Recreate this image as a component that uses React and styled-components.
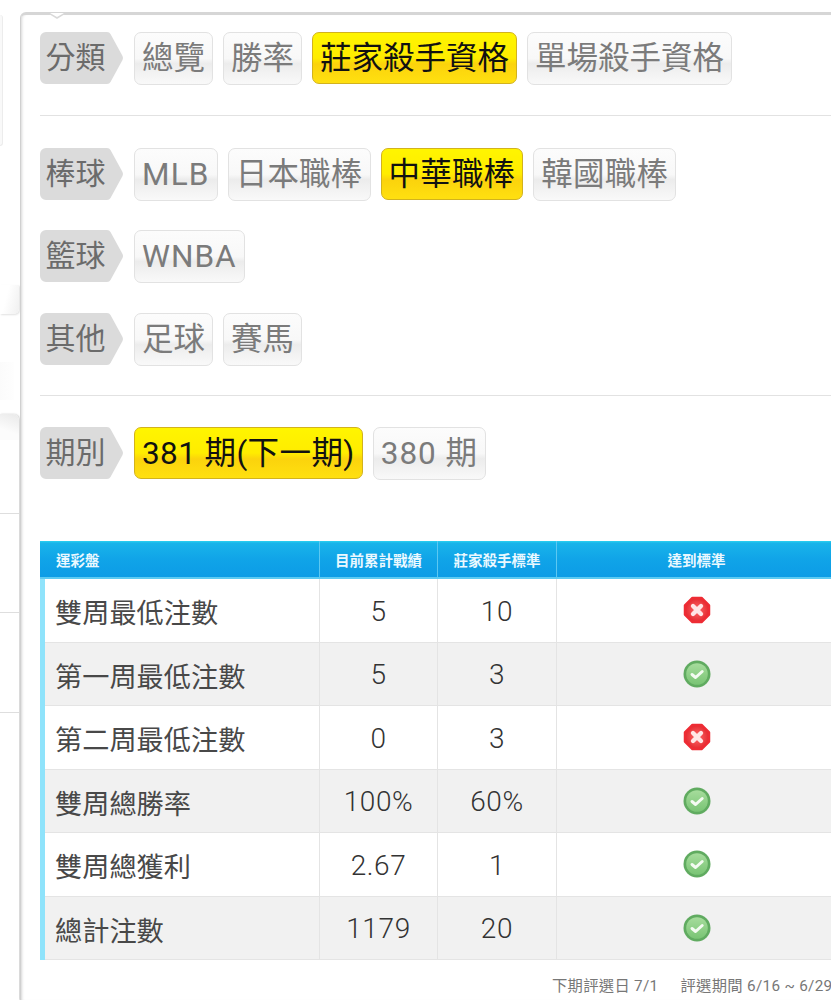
import React from "react";
import styled, { createGlobalStyle } from "styled-components";

const Global = createGlobalStyle`
  html, body { margin: 0; padding: 0; background: #fff; }
  body { font-family: Roboto, "Noto Sans CJK TC", sans-serif; overflow: hidden; }
`;
const Page = styled.div`
  width: 831px; height: 1000px; overflow: hidden; display: flex; background: #fff;
`;
const Side = styled.aside`
  width: 20px; flex: none; display: flex; flex-direction: column; height: 1000px;
`;
const Sliver = styled.div`
  width: 2px; height: 130px; margin-top: 15px; flex: none; background: #f9f9f9;
  border-right: 1px solid #ececec; border-bottom: 1px solid #ececec; border-radius: 0 4px 4px 0;
`;
const Fade = styled.div`
  width: 19px; height: 29px; margin-top: 139px; flex: none; box-sizing: border-box;
  background: linear-gradient(105deg, #fff 35%, #f0f0f0 100%);
  border-radius: 0 0 5px 0; box-shadow: 1px 1px 2px rgba(0,0,0,.12);
`;
const Ghost = styled.div`
  width: 14px; height: 38px; margin-top: 48px; flex: none; background: linear-gradient(90deg, #fbfbfb, #fefefe);
`;
const LowerCard = styled.div`
  width: 19px; margin-top: 14px; flex: 1; box-sizing: border-box; border-radius: 0 6px 0 0;
  box-shadow: 1px 0 2px rgba(0,0,0,.2); display: flex; flex-direction: column;
`;
const LowerHead = styled.div`
  height: 26px; flex: none; border-radius: 0 6px 0 0; background: linear-gradient(200deg, #e9e9e9, #fcfcfc 65%);
`;
const LowerRow = styled.div`
  height: ${p => p.$h}px; flex: none; box-sizing: border-box; border-bottom: 1px solid #dedede;
`;
const Panel = styled.main`
  flex: 1; margin-top: 12px; box-sizing: border-box; min-width: 0; position: relative;
  border-left: 1px solid #d0d0d0; border-top: 3px solid #d6d6d6; border-radius: 6px 0 0 0;
  box-shadow: inset 3px 0 3px -2px rgba(0,0,0,.16); padding: 17px 0 0 19px; display: flex; flex-direction: column;
  &::before { content: ""; position: absolute; left: 28px; top: -1px; border: 8px solid transparent; border-top: 5px solid #d9d9d9; border-bottom: 0; }
  &::after { content: ""; position: absolute; left: 29px; top: -2px; border: 7px solid transparent; border-top: 4px solid #fff; border-bottom: 0; }
`;
const Row = styled.div`
  display: flex; align-items: flex-start; height: 52px; margin-bottom: ${p => p.$mb || 0}px; white-space: nowrap;
`;
const Rule = styled.hr`
  border: 0; border-top: 1px solid #e2e2e2; margin: ${p => p.$t}px 0 ${p => p.$b}px; height: 0;
`;
const TagWrap = styled.div`
  width: 84px; height: 52px; flex: none; margin-right: 10px; position: relative;
  svg { position: absolute; inset: 0; }
`;
const TagText = styled.span`
  position: absolute; left: 5.5px; top: 1px; font-size: 30px; color: #6b6b6b; line-height: 50px;
`;
const Btn = styled.div`
  height: ${p => p.$on ? 52 : 53}px; box-sizing: border-box; border-radius: 7px; padding: 0 7px; margin-right: 10px; font-size: 31.5px; line-height: 52px; flex: none;
  letter-spacing: ${p => p.$ls || 0}px;
  color: ${p => p.$on ? "#111" : "#7b7b7b"};
  border: ${p => p.$on ? "1.5px solid #d2b21e" : "1px solid #e2e2e2"};
  background: ${p => p.$on
    ? "linear-gradient(#fff500 0%, #ffec00 50%, #fbd30c 62%, #ffe010 100%)"
    : "linear-gradient(#fcfcfc 0%, #f8f8f8 50%, #ececec 60%, #f9f9f9 100%)"};
`;
const Table = styled.div`
  margin-top: ${p => p.$t}px; border-left: 5px solid #8fe3fb; margin-right: -6px;
`;
const Grid = styled.div`
  display: grid; grid-template-columns: 275px 118px 119px 1fr; height: ${p => p.$h}px;
  background: ${p => p.$alt ? "#f1f1f1" : "#fff"}; border-bottom: 1px solid #e4e4e4; box-sizing: border-box; align-items: stretch;
`;
const Head = styled(Grid)`
  margin-left: -5px; grid-template-columns: 280px 118px 119px 1fr;
  background: linear-gradient(#2ad2f0 0, #18b4ea 6%, #10a4e8 50%, #0c9ce6 100%); border: 0; border-bottom: 2px solid #5ccbf2;
`;
const HeadCell = styled.div`
  font-size: 14.5px; font-weight: 700; color: #eaf8ff; display: flex; align-items: center; justify-content: ${p => p.$left ? "flex-start" : "center"};
  padding-left: ${p => p.$left ? 16 : 0}px; border-right: 1px solid ${p => p.$last ? "transparent" : "#5cc8f2"};
`;
const Cell = styled.div`
  color: #484848; display: flex; align-items: center; justify-content: center; padding-top: 2px;
  border-right: 1px solid ${p => p.$last ? "transparent" : "#e4e4e4"}; box-sizing: border-box;
`;
const NameCell = styled(Cell)`
  font-size: 27.2px; justify-content: flex-start; padding-left: 10px;
`;
const NumCell = styled(Cell)`
  font-size: 28px; letter-spacing: .6px; font-weight: 300; color: #333;
`;
const IconCell = styled(Cell)`
  padding-top: 0;
`;
const Foot = styled.div`
  font-size: 15.3px; color: #777; white-space: nowrap; margin: 13px 0 0 512px; display: flex; gap: 22px; letter-spacing: .3px;
`;
const Bad = () => (
  <svg width="28" height="28" viewBox="0 0 28 28">
    <defs>
      <radialGradient id="badFill"><stop offset="0" stopColor="#ff6a6a" /><stop offset="1" stopColor="#e42a30" /></radialGradient>
    </defs>
    <polygon points="9.5,2 18.5,2 26,9.5 26,18.5 18.5,26 9.5,26 2,18.5 2,9.5" fill="url(#badFill)" stroke="#ee2c34" strokeWidth="2.5" strokeLinejoin="round" />
    <path d="M10 10l8 8M18 10l-8 8" stroke="#ffe6e6" strokeWidth="4.4" strokeLinecap="round" />
  </svg>
);
const Good = () => (
  <svg width="28" height="28" viewBox="0 0 28 28">
    <defs>
      <linearGradient id="goodFill" x1="0" y1="0" x2="0" y2="1"><stop offset="0" stopColor="#a6dc9c" /><stop offset="1" stopColor="#79c474" /></linearGradient>
    </defs>
    <circle cx="14" cy="14" r="13.5" fill="#60ab60" />
    <circle cx="14" cy="14" r="10.8" fill="url(#goodFill)" />
    <path d="M9 14.5l3.6 3 6.6-6" fill="none" stroke="#f4fbf2" strokeWidth="3" strokeLinecap="round" strokeLinejoin="round" />
  </svg>
);
const Label = ({ children }) => (
  <TagWrap>
    <svg width="84" height="52" viewBox="0 0 84 52">
      <path d="M6 0H67Q69.5 0 70.5 2L82.5 24Q83.5 26 82.5 28L70.5 50Q69.5 52 67 52H6a6 6 0 0 1-6-6V6a6 6 0 0 1 6-6z" fill="#dbdbdb" />
    </svg>
    <TagText>{children}</TagText>
  </TagWrap>
);
const rows = [
  ["雙周最低注數", "5", "10", false],
  ["第一周最低注數", "5", "3", true],
  ["第二周最低注數", "0", "3", false],
  ["雙周總勝率", "100%", "60%", true],
  ["雙周總獲利", "2.67", "1", true],
  ["總計注數", "1179", "20", true],
];
export default function App() {
  return (
    <Page>
      <Global />
      <Side>
        <Sliver />
        <Fade />
        <Ghost />
        <LowerCard>
          <LowerHead />
          <LowerRow $h={74} />
          <LowerRow $h={99} />
          <LowerRow $h={100} />
        </LowerCard>
      </Side>
      <Panel>
        <Row>
          <Label>分類</Label>
          <Btn>總覽</Btn><Btn>勝率</Btn><Btn $on>莊家殺手資格</Btn><Btn>單場殺手資格</Btn>
        </Row>
        <Rule $t={31} $b={32} />
        <Row $mb={30}>
          <Label>棒球</Label>
          <Btn $ls={1.2}>MLB</Btn><Btn $ls={.2}>日本職棒</Btn><Btn $on $ls={.2}>中華職棒</Btn><Btn $ls={.2}>韓國職棒</Btn>
        </Row>
        <Row $mb={31}>
          <Label>籃球</Label>
          <Btn $ls={1}>WNBA</Btn>
        </Row>
        <Row>
          <Label>其他</Label>
          <Btn>足球</Btn><Btn>賽馬</Btn>
        </Row>
        <Rule $t={30} $b={31} />
        <Row>
          <Label>期別</Label>
          <Btn $on $ls={.4}>381 期(下一期)</Btn><Btn $ls={1}>380 期</Btn>
        </Row>
        <Table $t={62}>
          <Head $h={38}>
            <HeadCell $left>運彩盤</HeadCell>
            <HeadCell>目前累計戰績</HeadCell>
            <HeadCell>莊家殺手標準</HeadCell>
            <HeadCell $last>達到標準</HeadCell>
          </Head>
          {rows.map((r, i) => (
            <Grid key={r[0]} $h={63.5} $alt={i % 2 === 1}>
              <NameCell>{r[0]}</NameCell>
              <NumCell>{r[1]}</NumCell>
              <NumCell>{r[2]}</NumCell>
              <IconCell $last>{r[3] ? <Good /> : <Bad />}</IconCell>
            </Grid>
          ))}
        </Table>
        <Foot><span>下期評選日 7/1</span><span>評選期間 6/16 ~ 6/29</span></Foot>
      </Panel>
    </Page>
  );
}
